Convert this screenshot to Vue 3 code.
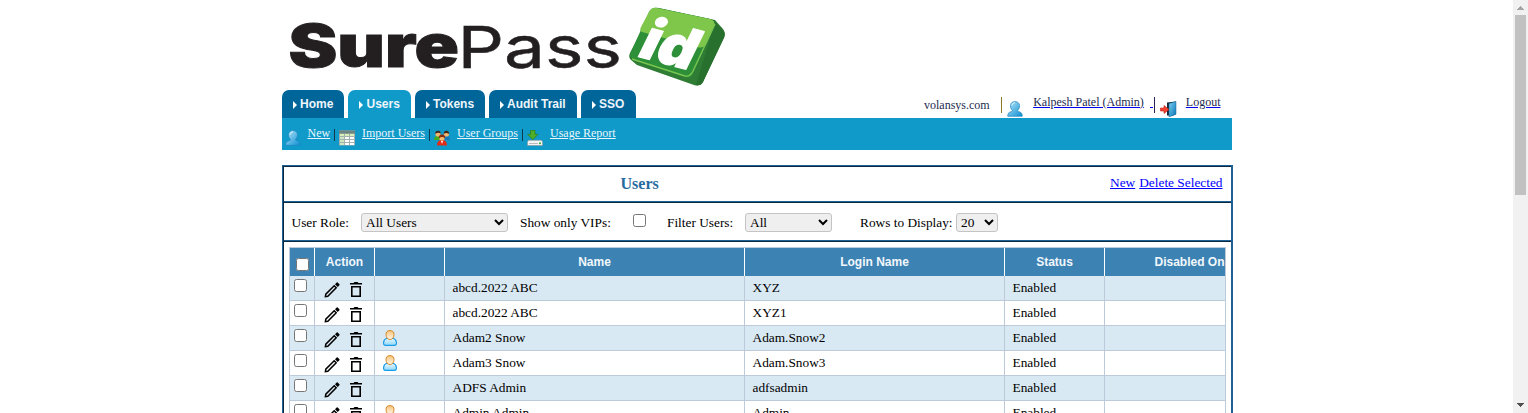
<script setup>
import { ref } from 'vue'

const tabs = [
  { label: 'Home', w: 'w-home' },
  { label: 'Users', w: 'w-users active' },
  { label: 'Tokens', w: 'w-tokens' },
  { label: 'Audit Trail', w: 'w-audit' },
  { label: 'SSO', w: 'w-sso' }
]
const rows = [
  { name: 'abcd.2022 ABC', login: 'XYZ' },
  { name: 'abcd.2022 ABC', login: 'XYZ1' },
  { name: 'Adam2 Snow', login: 'Adam.Snow2', person: true },
  { name: 'Adam3 Snow', login: 'Adam.Snow3', person: true },
  { name: 'ADFS Admin', login: 'adfsadmin' },
  { name: 'Admin Admin', login: 'Admin', person: true }
]
const role = ref('All Users')
const filter = ref('All')
const count = ref('20')
</script>

<template>
  <div class="window">
    <svg width="0" height="0" class="defs">
      <defs>
        <linearGradient id="blueFill" x1="0" y1="0" x2="1" y2="1">
          <stop offset="0" stop-color="#b5e4fa" />
          <stop offset="1" stop-color="#0b8fd0" />
        </linearGradient>
        <linearGradient id="doorFill" x1="0" y1="0" x2="1" y2="1">
          <stop offset="0" stop-color="#7cd0f2" />
          <stop offset="1" stop-color="#0874b4" />
        </linearGradient>
        <linearGradient id="headFill" x1="0" y1="0" x2="0" y2="1">
          <stop offset="0" stop-color="#f8c27a" />
          <stop offset="1" stop-color="#fff8ea" />
        </linearGradient>
        <linearGradient id="bodyFill" x1="0" y1="0" x2="0" y2="1">
          <stop offset="0" stop-color="#e8f8ff" />
          <stop offset="1" stop-color="#8fd8fb" />
        </linearGradient>
        <symbol id="user" viewBox="0 0 16 16">
          <path d="M.8 15.300C.4 12.500 2 11 4.700 10.500 5.600 10.300 5.600 9.700 5 9 3.900 7.800 3.500 6.400 3.500 4.800 3.500 2.200 5.200.6 8 .6s4.500 1.600 4.500 4.200c0 1.600-.4 3-1.500 4.200-.6.7-.6 1.300.3 1.500 2.700.5 4.300 2 3.900 4.800z" fill="url(#blueFill)" stroke="#1e86c2" stroke-width=".7" />
          <path d="M5 4.500C5.300 2.600 6.400 1.800 8 1.800" fill="none" stroke="#e8f9ff" stroke-width=".9" />
        </symbol>
      </defs>
    </svg>

    <main class="page">
      <header class="brand">
        <svg width="450" height="90" viewBox="282 0 450 90">
          <text class="sure" x="288.500" y="67" textLength="170.500" lengthAdjust="spacingAndGlyphs">Sure</text>
          <text class="pass" x="457.500" y="67.500" textLength="164.500" lengthAdjust="spacingAndGlyphs">Pass</text>
          <path d="M652 10q2-3 7-2l56 12 8 9q3 4 1 8l-21 45q-3 5-9 3l-57-20-6-5q-3-3-1-7z" fill="#2f7d34" />
          <path d="M715 22l8 8q3 4 1 8l-21 44q-2 4-7 3z" fill="#28702e" />
          <path d="M649 12q3-5 8-4l53 11q6 2 4 7l-21 48q-2 5-8 3l-50-17q-7-2-4-8z" fill="#2d8f37" />
          <path d="M649 12q3-5 8-4l53 11q6 2 4 7l-8 18q-3 5-9 3l-55-15q-3-1-1-5z" fill="#7ec74b" />
          <path d="M715 24l-22 47q-3 6-8 5l-53-17" fill="none" stroke="#78c650" stroke-width="1.400" />
          <g transform="translate(635.500 56) rotate(15) skewX(-11)">
            <text class="id-mark" x="0" y="0" textLength="55" lengthAdjust="spacingAndGlyphs">id</text>
          </g>
        </svg>
      </header>

      <div class="top-row">
        <nav class="tabs">
          <a v-for="t in tabs" :key="t.label" class="tab" :class="t.w"><i class="arrow"></i>{{ t.label }}</a>
        </nav>
        <div class="account">
          <span class="domain">volansys.com</span>
          <i class="rule gold"></i>
          <svg class="ico acc-user" width="16" height="16"><use href="#user" /></svg>
          <a class="acc-link">Kalpesh Patel (Admin)</a>
          <i class="dash"></i>
          <i class="rule navy"></i>
          <svg class="ico exit" width="17" height="16" viewBox="0 0 17 16">
            <path d="M7 1.500L16 .5V13l-3 1.500H7z" fill="#152a38" />
            <path d="M9 2.500L16 .5v12.700L9 16z" fill="url(#doorFill)" stroke="#126799" stroke-width=".5" />
            <path d="M.5 7H4V4.500L9 8.500 4 12.500V10H.5z" fill="#f4412f" stroke="#bd2119" stroke-width=".6" />
          </svg>
          <a class="acc-link">Logout</a>
        </div>
      </div>

      <nav class="subnav">
        <svg class="ico" width="16" height="16"><use href="#user" /></svg>
        <a class="s-new">New</a><i class="bar"></i>
        <svg class="ico" width="16" height="16" viewBox="0 0 16 16">
          <path d="M0 .5h16v15H0z" fill="#a3b0b0" />
          <path d="M0 .5h16v3H0z" fill="#6c8581" />
          <path d="M1 4h4v2H1zM6 4h4v2H6zM11 4h4v2h-4z" fill="#d7efb9" />
          <path d="M1 7h4v2H1zM1 10h4v2H1zM1 13h4v2H1z" fill="#cfe8c2" />
          <path d="M6 7h4v2H6zM11 7h4v2h-4zM6 10h4v2H6zM11 10h4v2h-4zM6 13h4v2H6zM11 13h4v2h-4z" fill="#fff" />
        </svg>
        <a class="s-import">Import Users</a><i class="bar"></i>
        <svg class="ico" width="16" height="16" viewBox="0 0 16 16">
          <path d="M0 10q0-4 4-4t4 4z" fill="#43a91e" />
          <path d="M9 10q0-4 3.500-4T16 10z" fill="#1878bc" />
          <circle cx="4" cy="4" r="2.600" fill="#f0b872" /><circle cx="12.400" cy="4" r="2.600" fill="#f0b872" />
          <path d="M1.300 4Q1 .8 4 .8T6.600 3.500Q4 2 1.300 4zM9.800 4Q9.500.8 12.400.8T15 4Q12 2 9.800 4z" fill="#3f2818" />
          <path d="M3 15.500Q3 10 8 10t5 5.500z" fill="#e52b16" />
          <circle cx="8" cy="8" r="2.700" fill="#f4bd70" />
          <path d="M5 8.500Q4.500 4.600 8 4.600T11 8.500Q8 5.700 5 8.500z" fill="#8b2b0e" />
          <path d="M7 11h2l-1 3z" fill="#fff" />
        </svg>
        <a class="s-groups">User Groups</a><i class="bar"></i>
        <svg class="ico" width="16" height="16" viewBox="0 0 16 16">
          <path d="M1.500 10.300h13l1 1.500v3.700H.5v-3.700z" fill="#f4f4f4" stroke="#8b9296" stroke-width=".6" />
          <path d="M3.500.3h4.500v4h3L5.800 9.700.5 4.300h3z" fill="#4fae27" stroke="#2b7c16" stroke-width=".7" />
          <path d="M2 13.500h9" stroke="#bbb" /><circle cx="13" cy="13.300" r="1" fill="#30a829" />
        </svg>
        <a class="s-usage">Usage Report</a>
      </nav>

      <section class="panel">
        <div class="title-row">
          <h1>Users</h1>
          <div class="actions"><a>New</a><a>Delete Selected</a></div>
        </div>
        <div class="filters">
          <label class="l-role">User Role:</label>
          <select v-model="role" class="sel-role"><option>All Users</option></select>
          <label class="l-vip">Show only VIPs:</label>
          <input type="checkbox" class="vip" />
          <label class="l-filter">Filter Users:</label>
          <select v-model="filter" class="sel-filter"><option>All</option></select>
          <label class="l-rows">Rows to Display:</label>
          <select v-model="count" class="sel-rows"><option>20</option></select>
        </div>
        <div class="grid">
          <div class="row head">
            <div class="check"><input type="checkbox" /></div>
            <div>Action</div><div></div><div>Name</div><div>Login Name</div><div>Status</div>
            <div class="disabled">Disabled On</div>
          </div>
          <div v-for="(r, i) in rows" :key="i" class="row item" :class="{ alt: i % 2 === 0 }">
            <div class="check"><input type="checkbox" /></div>
            <div class="acts">
              <svg width="16" height="16" viewBox="0 0 16 16">
                <path d="M1.400 14.600l.4-2.400L10.200 3.800l2 2-8.400 8.400z" fill="none" stroke="#000" stroke-width="1.500" />
                <path d="M11 2.300L12.700.6q.5-.5 1 0l1.700 1.700q.5.5 0 1L13.700 5z" fill="#000" />
              </svg>
              <svg width="12" height="16" viewBox="0 0 12 16">
                <path d="M0 1h3.500l1-1h3l1 1H12v1.500H0z" fill="#000" />
                <path d="M1.800 4.800h8.400v9.400H1.800z" fill="none" stroke="#000" stroke-width="1.600" />
              </svg>
            </div>
            <div class="who">
              <svg v-if="r.person" width="14" height="16" viewBox="0 0 14 16">
                <path d="M2.500 15.400Q.4 15.300.6 12.500.8 9.300 4 8.300h6q3.200 1 3.400 4.200.2 2.800-1.900 2.900z" fill="url(#bodyFill)" stroke="#1b9ce8" stroke-width="1.200" />
                <path d="M7 .6c2.800 0 4.200 1.600 4 4.200S9.500 9.500 7 9.500 3.200 7.400 3 4.800 4.200.6 7 .6z" fill="url(#headFill)" stroke="#d58a2c" stroke-width="1" />
              </svg>
            </div>
            <div>{{ r.name }}</div><div>{{ r.login }}</div><div>Enabled</div><div></div>
          </div>
        </div>
      </section>
    </main>

    <aside class="scrollbar">
      <svg width="15" height="15"><path d="M7 6h1v1h1v1h1v1h1v1H4V9h1V8h1V7h1z" fill="#a3a3a3" /></svg>
      <div class="thumb"></div>
      <svg width="15" height="15" class="down"><path d="M4 5h7v1h-1v1H9v1H8v1H7V8H6V7H5V6H4z" fill="#505050" /></svg>
    </aside>
  </div>
</template>

<style>
body { margin: 0; overflow: hidden; background: #fff; }
</style>

<style scoped>
.window { display: flex; height: 413px; overflow: hidden; font: 13.333px "Liberation Serif", serif; color: #000; }
.defs { position: absolute; }
.page { width: 951px; margin-left: 282px; flex: none; }
svg { display: block; flex: none; }
.brand { height: 90px; }
.sure { font: 900 59px Inter, "Liberation Sans", sans-serif; fill: #231f20; stroke: #231f20; stroke-width: 1; }
.pass { font: 400 58px Inter, "Liberation Sans", sans-serif; fill: #231f20; stroke: #231f20; stroke-width: .5; }
.id-mark { font: 900 57px Inter, "Liberation Sans", sans-serif; fill: #fff; stroke: #fff; stroke-width: 1; }

.top-row { display: flex; width: 950px; height: 28px; }
.tabs { display: flex; gap: 4px; font: bold 12px/28px "Liberation Sans", sans-serif; }
.tab { display: flex; align-items: center; box-sizing: border-box; padding-left: 11px; height: 28px; background: #069; color: #eef5fb; border-radius: 7px 7px 0 0; white-space: nowrap; }
.tab.active { background: #0f9aca; }
.w-home { width: 62px; } .w-users { width: 63px; } .w-tokens { width: 70px; } .w-audit { width: 88px; } .w-sso { width: 55px; }
.arrow { border-left: 4px solid #fff; border-top: 4px solid transparent; border-bottom: 4px solid transparent; margin: 1px 3px 0 0; }
.active .arrow { margin-right: 3.5px; }

.account { display: flex; margin-left: auto; align-items: flex-start; font-size: 12px; line-height: 14px; color: #1d2b50; white-space: nowrap; padding-right: 11.5px; }
.domain { margin: 8px 11px 0 0; }
.rule { width: 1px; height: 16px; margin-top: 7px; }
.gold { background: #8b7b20; } .navy { background: #24245c; }
.account .ico { margin-top: 11px; }
.acc-user { margin: 0 10.5px 0 5px; }
.acc-link { margin-top: 5px; text-decoration: underline #0000ee; }
.dash { width: 3px; height: 1px; background: #00e; margin: 17px 1px 0 6px; }
.exit { margin: 0 9px 0 5px; }

.subnav { display: flex; align-items: flex-start; width: 950px; height: 32px; box-sizing: border-box; padding: 8px 0 0 3px; background: #0f9aca; font-size: 12px; line-height: 14px; }
.subnav .ico { margin-top: 4px; }
.subnav a { flex: none; color: #eaf6fb; text-decoration: underline; white-space: nowrap; margin-left: 6.5px; }
.subnav .bar + .ico { margin-right: 1px; }
.bar { width: 1px; height: 12px; background: #12364c; margin: 3px 4px 0 3px; }
.s-new { width: 23px; } .s-import { width: 63.500px; } .s-groups { width: 61.500px; }

.panel { margin-top: 15px; width: 951px; height: 300px; box-sizing: border-box; border: 1px solid #1f6193; border-right-width: 2px; box-shadow: inset 1px 1px 0 #0a2942; padding: 1px 0 0 1px; }
.title-row { display: flex; height: 34px; border-bottom: 1px solid #1f6193; box-shadow: 0 1px 0 #0a2942; align-items: center; }
h1 { margin: 0 0 0 336.500px; font-size: 16px; line-height: 18px; color: #266b9e; }
.actions { display: flex; gap: 4px; margin: 0 8.500px 0 auto; padding-bottom: 2px; color: #00f; text-decoration: underline; }
.filters { display: flex; margin-top: 1px; height: 37px; border-bottom: 1px solid #1f6193; box-shadow: 0 1px 0 #0a2942; padding-left: 8px; line-height: 15px; white-space: nowrap; }
.filters label { margin-top: 12px; flex: none; }
.filters select { box-sizing: border-box; flex: none; height: 19px; margin: 10px 0 0; font: 13.333px "Liberation Serif", serif; border: 1px solid #c4c4c4; border-radius: 3px; background-color: #efefef; color: #000; padding: 0; }
.filters .l-role { width: 69.500px; margin-left: -.5px; } .sel-role { width: 147px; }
.filters .l-vip { margin-left: 12px; width: 113px; }
input { margin: 0; width: 13px; height: 13px; }
.filters .vip { margin: 11px 21px 0 0; }
.l-filter { width: 78px; } .sel-filter { width: 87px; }
.filters .l-rows { margin-left: 28px; width: 96px; }
.sel-rows { width: 42px; }

.grid { margin: 6px 0 0 5px; width: 935px; border: 1px solid #bccada; border-bottom: 0; }
.row { display: grid; grid-template-columns: 25px 60px 70px 300px 260px 100px 120px; height: 25px; overflow: hidden; }
.row > div { box-sizing: border-box; border-right: 1px solid #bccada; border-bottom: 1px solid #bccada; padding: 4px 0 0 7.500px; line-height: 15px; white-space: nowrap; overflow: hidden; }
.row > div:last-child { border-right: 0; }
.row.head { height: 28px; background: #3c82b3; color: #f2f7fc; font: bold 12px "Liberation Sans", sans-serif; text-align: center; }
.row.head > div { border-right-color: #fff; border-bottom: 0; padding: 6px 0 0; line-height: 16px; }
.row.head > .check { padding: 10px 0 0 6px; }
.row.head > .disabled { text-align: left; padding-left: 49.500px; }
.alt { background: #d9e9f3; }
.row.item > .check { padding: 3px 0 0 4px; }
.check input { display: block; }
.row.item > .acts { display: flex; gap: 10px; padding: 6px 0 0 9px; }
.row.item > .who { padding: 4px 0 0 8px; }

.scrollbar { display: flex; flex-direction: column; width: 15px; height: 413px; margin-left: auto; background: #f1f1f1; }
.thumb { width: 11px; height: 180px; margin-left: 2px; background: #c1c1c1; }
.down { margin-top: auto; }
</style>
